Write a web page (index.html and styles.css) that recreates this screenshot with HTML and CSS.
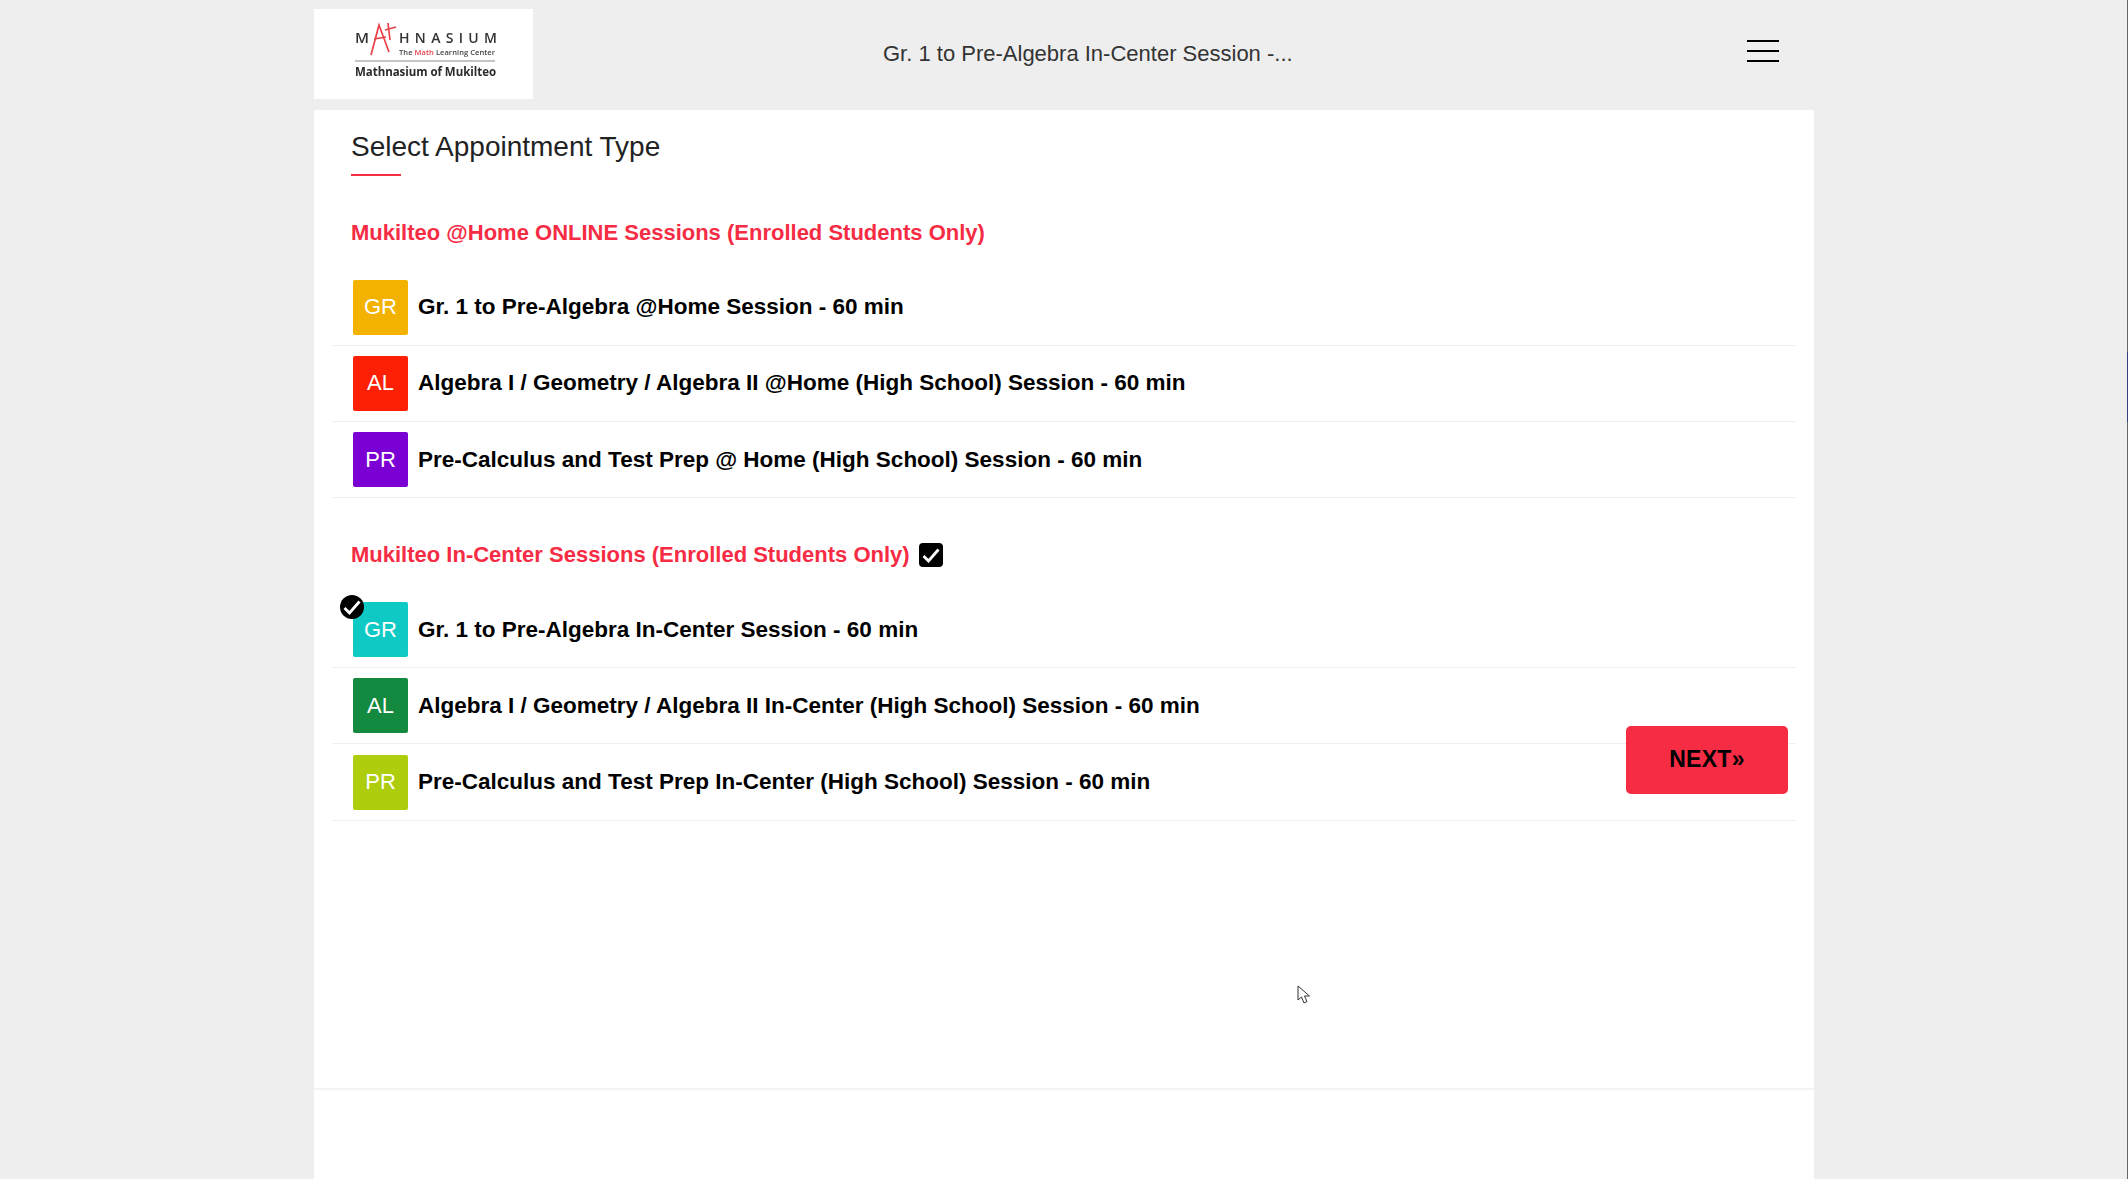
FILE: index.html
```html
<!DOCTYPE html>
<html lang="en">
<head>
<meta charset="utf-8">
<title>Select Appointment Type</title>
<link rel="stylesheet" href="styles.css">
</head>
<body>
<div class="page">
  <header class="topbar">
    <div class="logo">
      <svg class="logo-art" width="219" height="90" viewBox="0 0 219 90">
        <text class="lg-word" x="41" y="34" textLength="14" lengthAdjust="spacingAndGlyphs">M</text>
        <text class="lg-word" x="85" y="34" textLength="98" lengthAdjust="spacing">HNASIUM</text>
        <path class="lg-mark" d="M57 46 L65 16 L75 43 M60 30 L72 28 M71 21 L82 18 M74 14 L76 31"/>
        <text class="lg-tag" x="85" y="46" textLength="96" lengthAdjust="spacing">The <tspan class="lg-red">Math</tspan> Learning Center</text>
        <rect class="lg-rule" x="41" y="51" width="140" height="2"/>
        <text class="lg-name" x="41" y="67" textLength="141" lengthAdjust="spacing">Mathnasium of Mukilteo</text>
      </svg>
    </div>
    <div class="session-title">Gr. 1 to Pre-Algebra In-Center Session -...</div>
    <button class="burger" aria-label="Menu"><span></span><span></span><span></span></button>
  </header>

  <main class="panel">
    <div class="content">
      <h1 class="page-title">Select Appointment Type</h1>

      <section class="group">
        <h2 class="group-title">Mukilteo @Home ONLINE Sessions (Enrolled Students Only)</h2>
        <ul class="rows">
          <li class="row"><span class="tile tile-amber">GR</span><span class="row-label">Gr. 1 to Pre-Algebra @Home Session - 60 min</span></li>
          <li class="row"><span class="tile tile-red">AL</span><span class="row-label">Algebra I / Geometry / Algebra II @Home (High School) Session - 60 min</span></li>
          <li class="row"><span class="tile tile-purple">PR</span><span class="row-label">Pre-Calculus and Test Prep @ Home (High School) Session - 60 min</span></li>
        </ul>
      </section>

      <section class="group group-second">
        <h2 class="group-title">Mukilteo In-Center Sessions (Enrolled Students Only)
          <span class="box-check"><svg width="18" height="15" viewBox="0 0 18 15"><path d="M1.5 8 L6.5 13 L16.5 1.5"/></svg></span>
        </h2>
        <ul class="rows">
          <li class="row"><span class="tile tile-teal">GR<span class="tick"><svg width="18" height="15" viewBox="0 0 18 15"><path d="M1.5 8 L6.5 13 L16.5 1.5"/></svg></span></span><span class="row-label">Gr. 1 to Pre-Algebra In-Center Session - 60 min</span></li>
          <li class="row"><span class="tile tile-green">AL</span><span class="row-label">Algebra I / Geometry / Algebra II In-Center (High School) Session - 60 min</span></li>
          <li class="row"><span class="tile tile-lime">PR</span><span class="row-label">Pre-Calculus and Test Prep In-Center (High School) Session - 60 min</span></li>
        </ul>
        <button class="next">NEXT»</button>
      </section>
    </div>
    <div class="panel-foot"></div>
  </main>
</div>
<svg class="cursor" width="15" height="21" viewBox="0 0 15 21"><path d="M1 1 L1 15 L4.5 12 L7 18 L10 16.5 L7.5 11 L12.5 11 Z"/></svg>
<div class="edge"></div>
</body>
</html>
```

FILE: styles.css
```css
* { box-sizing: border-box; }
html, body { margin: 0; height: 100%; overflow: hidden; }
body { background: #eeeeee; font-family: "Liberation Sans", Arial, sans-serif; color: #000; }
.page { width: 1500px; margin: 0 auto 0 314px; }
.topbar { display: flex; align-items: flex-start; height: 110px; padding-top: 9px; position: relative; }
.logo { width: 219px; height: 90px; background: #fff; flex: none; }
.logo-art { display: block; filter: blur(0.3px); }
.lg-word { font: 600 14px "Open Sans", sans-serif; fill: #333; }
.lg-mark { fill: none; stroke: #ea4148; stroke-width: 1.7; }
.lg-tag { font: 600 7.5px "Open Sans", sans-serif; fill: #444; }
.lg-red { fill: #ea4148; }
.lg-rule { fill: #c4c4c4; }
.lg-name { font: 700 11.5px "Open Sans", sans-serif; fill: #2b2b2b; }
.session-title { margin-left: 350px; margin-top: 32px; font-size: 22px; line-height: 26px; color: #333; white-space: nowrap; }
.burger { position: absolute; left: 1433px; top: 40px; width: 32px; height: 22px; padding: 0; border: 0; background: none; display: flex; flex-direction: column; justify-content: space-between; }
.burger span { display: block; height: 2px; background: #000; }
.panel { background: #fff; height: 1069px; display: flex; flex-direction: column; }
.content { height: 978px; padding: 0 18px 0 18px; }
.panel-foot { border-top: 2px solid #f3f3f3; flex: 1; }
.page-title { margin: 21px 0 0 19px; font-size: 28px; line-height: 32px; font-weight: 400; color: #222; position: relative; height: 66px; }
.page-title::after { content: ""; position: absolute; left: 0; top: 43px; width: 50px; height: 2px; background: #f62b44; }
.group-title { margin: 0 0 0 19px; font-size: 22px; line-height: 26px; font-weight: 700; color: #f62b44; display: flex; align-items: center; gap: 9px; }
.group { position: relative; padding-top: 23px; }
.group-second { padding-top: 44px; }
.rows { list-style: none; margin: 23.5px 0 0; padding: 0; }
.group-second .rows { margin-top: 23.5px; }
.row { display: flex; align-items: center; height: 76.3px; padding-left: 21px; border-bottom: 1px solid #eeeeee; }
.tile { position: relative; flex: none; width: 55px; height: 55px; display: flex; align-items: center; justify-content: center; border-radius: 2px; color: #fff; font-size: 22px; }
.tile-amber { background: #f3b200; }
.tile-red { background: #fd2005; }
.tile-purple { background: #7a00d3; }
.tile-teal { background: #0fc9c4; }
.tile-green { background: #138a3f; }
.tile-lime { background: #aecd0c; }
.row-label { margin-left: 10px; font-size: 22.5px; font-weight: 700; white-space: nowrap; }
.tick { position: absolute; left: -13px; top: -7px; width: 24px; height: 24px; border-radius: 50%; background: #000; display: flex; align-items: center; justify-content: center; }
.tick svg path, .box-check svg path { fill: none; stroke: #fff; stroke-width: 2.8; }
.box-check { width: 24px; height: 24px; border-radius: 4px; background: #000; display: flex; align-items: center; justify-content: center; }
.next { position: absolute; right: 8px; bottom: 27px; width: 162px; height: 68px; border: 0; border-radius: 5px; background: #f62b44; color: #000; font: 700 23px "Liberation Sans", Arial, sans-serif; letter-spacing: 0.3px; }
.cursor { position: absolute; left: 1297px; top: 985px; }
.cursor path { fill: #fff; stroke: #333; stroke-width: 1; }
.edge { position: absolute; right: 0; top: 0; bottom: 0; width: 1px; background: linear-gradient(to bottom, #666 352px, #334080 352px, #334080 422px, #666 422px); }
```
